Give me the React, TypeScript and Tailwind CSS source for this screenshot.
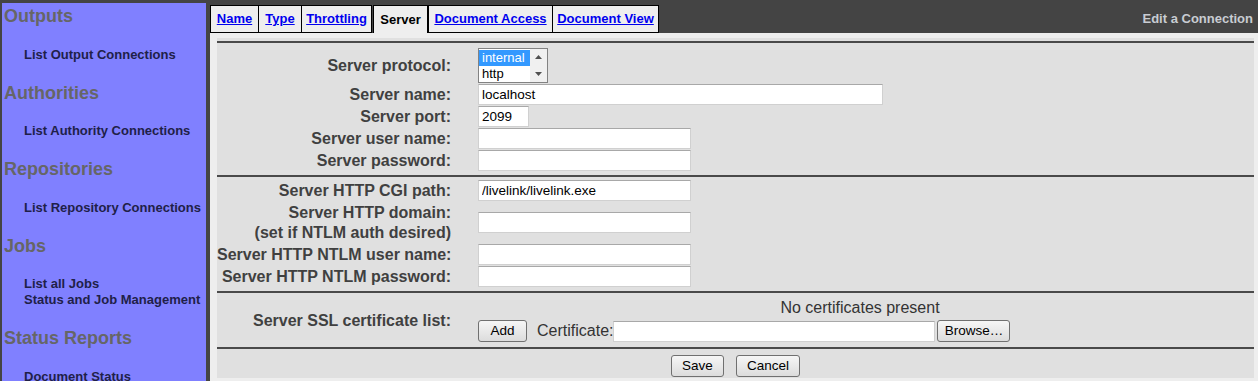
import React from "react";

const font = { fontFamily: '"Liberation Sans", Arial, sans-serif' };

const SideGroup = ({ title, links }: { title: string; links: string[] }) => (
  <div>
    <div className="text-[18px] leading-[22.5px] font-bold text-[#666666]">{title}</div>
    <ul className="my-[19px] ml-[20px]">
      {links.map((l) => (
        <li key={l} className="text-[13px] leading-[16px] font-bold text-[#202048] whitespace-nowrap">
          {l}
        </li>
      ))}
    </ul>
  </div>
);

const Tab = ({ label, w, active, last }: { label: string; w: string; active?: boolean; last?: boolean }) =>
  active ? (
    <div className={`${w} h-[28px] bg-[#eeeeee] border-x border-t border-black flex items-center justify-center text-[13px] font-bold text-black ml-[1px]`}>
      {label}
    </div>
  ) : (
    <div
      className={`${w} h-[28px] bg-[#eeeeee] border-l border-y border-black flex items-center justify-center ${last ? "border-r" : ""}`}
    >
      <span className="text-[13px] font-bold text-[#0000ee] underline whitespace-nowrap">{label}</span>
    </div>
  );

const TextBox = ({ w, value = "" }: { w: string; value?: string }) => (
  <input
    readOnly
    value={value}
    className={`${w} h-[21px] bg-white border border-[#d0d0d0] border-t-[#a8a8a8] px-[3px] text-[13.5px] text-black outline-none`}
    style={font}
  />
);

const Btn = ({ children, w }: { children: React.ReactNode; w: string }) => (
  <div
    className={`${w} h-[22px] flex items-center justify-center rounded-[3px] border border-[#707070] bg-gradient-to-b from-[#f6f6f6] to-[#dcdcdc] text-[13.5px] text-black`}
  >
    {children}
  </div>
);

const Row = ({ label, children }: { label: React.ReactNode; children: React.ReactNode }) => (
  <div className="flex items-center">
    <div className="w-[234px] shrink-0 text-right font-bold text-[16px] leading-[20px] text-[#404040] whitespace-nowrap">
      {label}
    </div>
    <div className="ml-[27px] flex-1 flex">{children}</div>
  </div>
);

const Line = () => <div className="h-[2px] bg-[#4a4a4a]" />;

export default function App() {
  return (
    <div className="flex w-[1258px] h-[381px] overflow-hidden bg-[#444444] pt-[3px] pl-[2px]" style={font}>
      <div className="w-[204px] shrink-0 bg-[#8080ff] pl-[2px] pt-[2px]">
        <SideGroup title="Outputs" links={["List Output Connections"]} />
        <SideGroup title="Authorities" links={["List Authority Connections"]} />
        <SideGroup title="Repositories" links={["List Repository Connections"]} />
        <SideGroup title="Jobs" links={["List all Jobs", "Status and Job Management"]} />
        <SideGroup title="Status Reports" links={["Document Status"]} />
      </div>

      <div className="ml-[4px] flex-1 flex flex-col">
        <div className="h-[30px] flex items-start pt-[2px] pr-[5px]">
          <Tab label="Name" w="w-[48px]" />
          <Tab label="Type" w="w-[43px]" />
          <Tab label="Throttling" w="w-[71px]" last />
          <Tab label="Server" w="w-[55px]" active />
          <Tab label="Document Access" w="w-[124px]" />
          <Tab label="Document View" w="w-[107px]" last />
          <div className="flex-1 h-[28px] flex items-center justify-end text-[13px] font-bold text-[#c8ccd2]">
            Edit a Connection
          </div>
        </div>

        <div className="flex-1 bg-[#eeeeee] pl-[7px] pr-[4px] pt-[5px] pb-[3px] flex">
          <div className="flex-1 bg-[#e0e0e0] pt-[3px] flex flex-col">
            <Line />
            <div className="pt-[5px] pb-[4px] flex flex-col gap-[1px]">
              <Row label="Server protocol:">
                <div className="w-[70px] h-[35px] bg-white border border-[#828282] flex">
                  <div className="flex-1 flex flex-col pt-[1px] text-[13px] leading-[16px]">
                    <div className="bg-[#3399ff] text-white px-[3px]">internal</div>
                    <div className="text-black px-[3px]">http</div>
                  </div>
                  <div className="w-[17px] bg-[#f0f0f0] flex flex-col items-center justify-between py-[6px]">
                    <svg width="7" height="4" viewBox="0 0 7 4">
                      <path d="M0 4 L3.5 0 L7 4 Z" fill="#505050" />
                    </svg>
                    <svg width="7" height="4" viewBox="0 0 7 4">
                      <path d="M0 0 L3.5 4 L7 0 Z" fill="#505050" />
                    </svg>
                  </div>
                </div>
              </Row>
              <Row label="Server name:">
                <TextBox w="w-[405px]" value="localhost" />
              </Row>
              <Row label="Server port:">
                <TextBox w="w-[51px]" value="2099" />
              </Row>
              <Row label="Server user name:">
                <TextBox w="w-[213px]" />
              </Row>
              <Row label="Server password:">
                <TextBox w="w-[213px]" />
              </Row>
            </div>
            <Line />
            <div className="pt-[3px] pb-[4px] flex flex-col gap-[1px]">
              <Row label="Server HTTP CGI path:">
                <TextBox w="w-[213px]" value="/livelink/livelink.exe" />
              </Row>
              <div className="h-[41px] flex items-center">
                <div className="w-full">
                  <Row
                    label={
                      <>
                        Server HTTP domain:
                        <br />
                        (set if NTLM auth desired)
                      </>
                    }
                  >
                    <TextBox w="w-[213px]" />
                  </Row>
                </div>
              </div>
              <Row label="Server HTTP NTLM user name:">
                <TextBox w="w-[213px]" />
              </Row>
              <Row label="Server HTTP NTLM password:">
                <TextBox w="w-[213px]" />
              </Row>
            </div>
            <Line />
            <div className="pt-[5px] pb-[4px]">
              <Row label="Server SSL certificate list:">
                <div className="flex-1 mr-[12px] flex flex-col gap-[1px]">
                  <div className="text-center text-[16px] leading-[20px] text-[#333333]">No certificates present</div>
                  <div className="flex items-center">
                    <Btn w="w-[49px]">Add</Btn>
                    <span className="ml-[10px] text-[16px] text-[#333333]">Certificate:</span>
                    <TextBox w="w-[322px]" />
                    <div className="ml-[2px]">
                      <Btn w="w-[73px]">Browse…</Btn>
                    </div>
                  </div>
                </div>
              </Row>
            </div>
            <Line />
            <div className="pt-[6px] flex justify-center gap-[12px]">
              <Btn w="w-[53px]">Save</Btn>
              <Btn w="w-[64px]">Cancel</Btn>
            </div>
          </div>
        </div>
      </div>
    </div>
  );
}
